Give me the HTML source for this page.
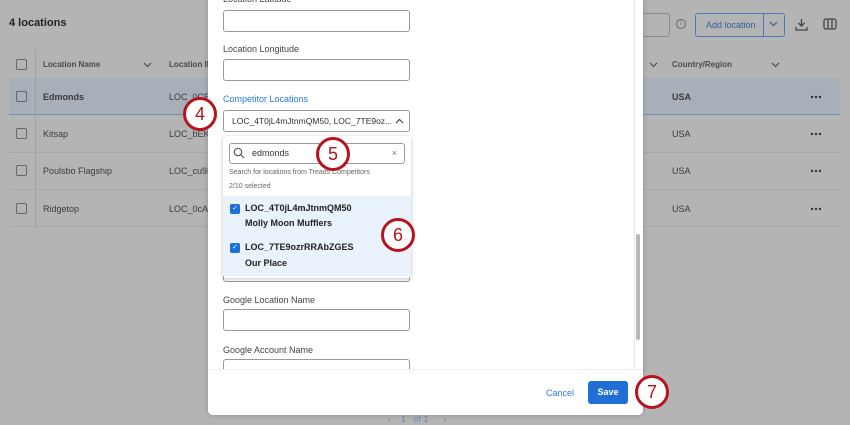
<!DOCTYPE html>
<html><head><style>
*{box-sizing:border-box;margin:0;padding:0}
body{width:850px;height:425px;overflow:hidden;background:#b4b4b4;font-family:"Liberation Sans",sans-serif;position:relative;color:#2b2b2b}
.a{position:absolute}
.t{font-size:9px;color:#3a3a3a}
.cb{position:absolute;left:16px;width:11px;height:11px;border:1px solid #666;border-radius:2px}
.row{position:absolute;left:9px;width:831px;height:37px;border-bottom:1px solid #a8a8a8}
.circ{position:absolute;width:34px;height:34px;border:3px solid #b4151f;border-radius:50%;background:#fff;color:#b4151f;font-size:18px;text-align:center;line-height:28px}
.inp{position:absolute;left:223px;width:187px;height:22px;border:1px solid #9a9a9a;border-radius:3px;background:#fff}
.lbl{position:absolute;left:223px;font-size:9px;color:#444}
.ck{position:absolute;left:230px;width:10px;height:10px;background:#1f6fd6;border-radius:2px;color:#fff;font-size:7px;line-height:10px;text-align:center}
.it{position:absolute;left:245px;font-size:9px;font-weight:bold;color:#222}
</style></head><body>
<div class="a" style="left:9px;top:17px;font-size:11px;font-weight:bold;color:#222">4 locations</div>
<div class="a" style="left:630px;top:13px;width:40px;height:24px;border:1px solid #8a8a8a;border-radius:3px"></div>
<div class="a" style="left:676px;top:19px;width:10px;height:10px;border:1px solid #666;border-radius:50%;font-size:6px;text-align:center;line-height:9px;color:#555">i</div>
<div class="a" style="left:695px;top:13px;width:90px;height:24px;border:1px solid #4a79b8;border-radius:3px;color:#2e5f9e;font-size:9px;line-height:22px;padding-left:10px">Add location</div>
<div class="a" style="left:763px;top:13px;width:1px;height:24px;background:#4a79b8"></div>
<svg class="a" style="left:769px;top:21px" width="9" height="6"><path d="M1 1l3.5 3.5L8 1" fill="none" stroke="#2e5f9e" stroke-width="1.2"/></svg>
<svg class="a" style="left:795px;top:18px" width="13" height="13"><path d="M6.5 1v7M3.5 5l3 3 3-3M1 9v3h11V9" fill="none" stroke="#444" stroke-width="1.3"/></svg>
<svg class="a" style="left:823px;top:17px" width="14" height="14"><rect x="1" y="2" width="12" height="10" rx="2" fill="none" stroke="#444" stroke-width="1.3"/><path d="M5 2v10M9 2v10" stroke="#444" stroke-width="1.3"/></svg>
<div class="cb" style="top:59px"></div>
<div class="a t" style="left:43px;top:60px;font-weight:bold;font-size:8px;color:#4a4a4a">Location Name</div>
<svg class="a" style="left:143px;top:62px" width="9" height="6"><path d="M1 1l3.5 3.5L8 1" fill="none" stroke="#444" stroke-width="1.1"/></svg>
<div class="a t" style="left:169px;top:60px;font-weight:bold;font-size:8px;color:#4a4a4a">Location ID</div>
<svg class="a" style="left:649px;top:62px" width="9" height="6"><path d="M1 1l3.5 3.5L8 1" fill="none" stroke="#444" stroke-width="1.1"/></svg>
<div class="a t" style="left:672px;top:60px;font-weight:bold;font-size:8px;color:#4a4a4a">Country/Region</div>
<svg class="a" style="left:771px;top:62px" width="9" height="6"><path d="M1 1l3.5 3.5L8 1" fill="none" stroke="#444" stroke-width="1.1"/></svg>
<div class="row" style="top:78px;background:#a7afb8;border-bottom:1px solid #6f8fb5"></div>
<div class="row" style="top:116px"></div>
<div class="row" style="top:153px"></div>
<div class="row" style="top:190px"></div>
<div class="a" style="left:35px;top:50px;width:1px;height:178px;background:#a0a0a0"></div>
<div class="cb" style="top:91px"></div><div class="a t" style="left:43px;top:92px;font-weight:bold">Edmonds</div><div class="a t" style="left:169px;top:92px">LOC_0CB</div>
<div class="cb" style="top:128px"></div><div class="a t" style="left:43px;top:129px">Kitsap</div><div class="a t" style="left:169px;top:129px">LOC_bEK</div>
<div class="cb" style="top:165px"></div><div class="a t" style="left:43px;top:166px">Poulsbo Flagship</div><div class="a t" style="left:169px;top:166px">LOC_cu9F</div>
<div class="cb" style="top:203px"></div><div class="a t" style="left:43px;top:204px">Ridgetop</div><div class="a t" style="left:169px;top:204px">LOC_0cAC</div>
<div class="a t" style="left:672px;top:92px;font-weight:bold">USA</div>
<div class="a t" style="left:672px;top:129px">USA</div>
<div class="a t" style="left:672px;top:166px">USA</div>
<div class="a t" style="left:672px;top:204px">USA</div>
<svg class="a" style="left:810px;top:95px" width="12" height="4"><circle cx="2" cy="2" r="1.2" fill="#333"/><circle cx="6" cy="2" r="1.2" fill="#333"/><circle cx="10" cy="2" r="1.2" fill="#333"/></svg>
<svg class="a" style="left:810px;top:132px" width="12" height="4"><circle cx="2" cy="2" r="1.2" fill="#333"/><circle cx="6" cy="2" r="1.2" fill="#333"/><circle cx="10" cy="2" r="1.2" fill="#333"/></svg>
<svg class="a" style="left:810px;top:169px" width="12" height="4"><circle cx="2" cy="2" r="1.2" fill="#333"/><circle cx="6" cy="2" r="1.2" fill="#333"/><circle cx="10" cy="2" r="1.2" fill="#333"/></svg>
<svg class="a" style="left:810px;top:207px" width="12" height="4"><circle cx="2" cy="2" r="1.2" fill="#333"/><circle cx="6" cy="2" r="1.2" fill="#333"/><circle cx="10" cy="2" r="1.2" fill="#333"/></svg>
<div class="a t" style="left:388px;top:414px;color:#6b86b0">‹ &nbsp;&nbsp; 1 &nbsp; of 1 &nbsp;&nbsp;&nbsp;&nbsp; ›</div>

<div class="a" style="left:208px;top:-5px;width:435px;height:420px;background:#fff;border-radius:5px;box-shadow:0 0 6px rgba(0,0,0,.2)"></div>
<div class="a" style="left:634px;top:0;width:1px;height:369px;background:#e8e8e8"></div>
<div class="a" style="left:636px;top:234px;width:4px;height:106px;background:#b8b8b8;border-radius:2px"></div>
<div class="lbl" style="top:-6px">Location Latitude</div>
<div class="inp" style="top:10px"></div>
<div class="lbl" style="top:44px">Location Longitude</div>
<div class="inp" style="top:59px"></div>
<div class="lbl" style="top:94px;color:#2d7be0">Competitor Locations</div>
<div class="inp" style="top:110px;font-size:8.5px;color:#333;line-height:20px;padding-left:8px;white-space:nowrap;overflow:hidden">LOC_4T0jL4mJtnmQM50, LOC_7TE9oz...</div>
<svg class="a" style="left:395px;top:118px" width="9" height="6"><path d="M1 5l3.5-3.5L8 5" fill="none" stroke="#444" stroke-width="1.2"/></svg>
<div class="inp" style="top:262px;height:20px"></div>
<div class="a" style="left:223px;top:136px;width:188px;height:142px;background:#fff;border-radius:3px;box-shadow:0 1px 4px rgba(0,0,0,.25)"></div>
<div class="a" style="left:229px;top:143px;width:176px;height:21px;border:1px solid #999;border-radius:3px;font-size:9px;line-height:19px;padding-left:22px;color:#333">edmonds<span style="position:absolute;right:7px;color:#777">×</span></div>
<svg class="a" style="left:233px;top:147px" width="12" height="12"><circle cx="5" cy="5" r="3.7" fill="none" stroke="#555" stroke-width="1.2"/><path d="M8 8l3 3" stroke="#555" stroke-width="1.2"/></svg>
<div class="a" style="left:229px;top:169px;font-size:7px;color:#666">Search for locations from Treads Competitors</div>
<div class="a" style="left:229px;top:183px;font-size:7px;color:#666">2/10 selected</div>
<div class="a" style="left:223px;top:196px;width:188px;height:80px;background:#eaf2fb"></div>
<div class="ck" style="top:204px">✓</div><div class="it" style="top:203px">LOC_4T0jL4mJtnmQM50</div><div class="it" style="top:218px">Molly Moon Mufflers</div>
<div class="ck" style="top:243px">✓</div><div class="it" style="top:242px">LOC_7TE9ozrRRAbZGES</div><div class="it" style="top:258px">Our Place</div>
<div class="lbl" style="top:295px">Google Location Name</div>
<div class="inp" style="top:309px"></div>
<div class="lbl" style="top:345px">Google Account Name</div>
<div class="inp" style="top:359px;height:14px;border-bottom:none"></div>
<div class="a" style="left:208px;top:369px;width:435px;height:46px;background:#fff;border-top:1px solid #eee;border-radius:0 0 5px 5px"></div>
<div class="a" style="left:546px;top:388px;font-size:9px;color:#2d7be0">Cancel</div>
<div class="a" style="left:588px;top:381px;width:40px;height:23px;background:#1f6fd6;border-radius:3px;color:#fff;font-size:9px;font-weight:bold;text-align:center;line-height:23px">Save</div>
<div class="circ" style="left:183px;top:97px">4</div>
<div class="circ" style="left:316px;top:137px">5</div>
<div class="circ" style="left:381px;top:218px">6</div>
<div class="circ" style="left:635px;top:375px">7</div>
</body></html>
